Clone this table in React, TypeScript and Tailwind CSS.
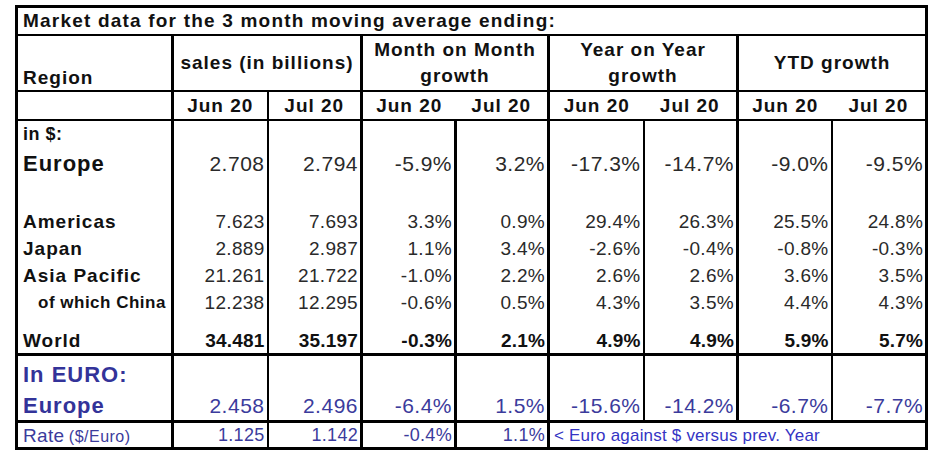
import React from "react";

type Row = {
  label: string;
  values: string[];
  kind: "normal" | "big" | "bold" | "euro" | "indent";
};

// right borders per column in the body
const bodyBorders = [
  "border-r-[3px]",
  "border-r-2",
  "border-r-[3px]",
  "border-r-[3px]",
  "border-r-[3px]",
  "border-r-2",
  "border-r-[3px]",
  "border-r-2",
  "",
];

const subBorders = [
  "border-r-[3px]",
  "border-r-2",
  "border-r-[3px]",
  "",
  "border-r-[3px]",
  "",
  "border-r-[3px]",
  "",
  "",
];

const widths = ["w-[156px]", "w-[95px]", "w-[94px]", "w-[94px]", "w-[93px]", "w-[95px]", "w-[94px]", "w-[94px]", "w-[95px]"];

const usdRows: Row[] = [
  { label: "Americas", values: ["7.623", "7.693", "3.3%", "0.9%", "29.4%", "26.3%", "25.5%", "24.8%"], kind: "normal" },
  { label: "Japan", values: ["2.889", "2.987", "1.1%", "3.4%", "-2.6%", "-0.4%", "-0.8%", "-0.3%"], kind: "normal" },
  { label: "Asia Pacific", values: ["21.261", "21.722", "-1.0%", "2.2%", "2.6%", "2.6%", "3.6%", "3.5%"], kind: "normal" },
  { label: "of which China", values: ["12.238", "12.295", "-0.6%", "0.5%", "4.3%", "3.5%", "4.4%", "4.3%"], kind: "indent" },
];

function BlankRow({ h, bottom = "" }: { h: string; bottom?: string }) {
  return (
    <tr className={cn(h, bottom)}>
      {bodyBorders.map((b, i) => (
        <td key={i} className={cn("p-0 border-black", b)} />
      ))}
    </tr>
  );
}

function cn(...parts: string[]) {
  return parts.filter(Boolean).join(" ");
}

function DataRow({ row, h, bottom = "" }: { row: Row; h: string; bottom?: string }) {
  const labelCls =
    row.kind === "big"
      ? "text-[22px] font-bold tracking-[1px] text-[#111]"
      : row.kind === "euro"
      ? "text-[22px] font-bold tracking-[1px] text-[#333399]"
      : row.kind === "indent"
      ? "text-[17px] font-bold tracking-[0.5px] text-[#111] pl-[20px]"
      : "text-[19px] font-bold tracking-[1px] text-[#111]";
  const numCls =
    row.kind === "big"
      ? "text-[21px] tracking-[0.5px] text-[#2a2a2a]"
      : row.kind === "euro"
      ? "text-[21px] tracking-[0.5px] text-[#3b3b9c]"
      : row.kind === "bold"
      ? "text-[19px] font-bold tracking-[0.2px] text-[#111]"
      : "text-[19px] tracking-[0.3px] text-[#2a2a2a]";
  return (
    <tr className={cn(h, bottom)}>
      <td className={cn("p-0 pl-[5px] border-black whitespace-nowrap leading-none", bodyBorders[0], labelCls)}>
        {row.label}
      </td>
      {row.values.map((v, i) => (
        <td
          key={i}
          className={cn("p-0 pr-[2px] text-right border-black whitespace-nowrap leading-none", bodyBorders[i + 1], numCls)}
        >
          {v}
        </td>
      ))}
    </tr>
  );
}

export default function App() {
  return (
    <div className="min-h-[454px] w-[940px] bg-white pl-[15px] pt-[5px] font-['Liberation_Sans',Arial,sans-serif]">
      <table className="w-[910px] table-fixed border-collapse border-[3px] border-black">
        <colgroup>
          {widths.map((w, i) => (
            <col key={i} className={w} />
          ))}
        </colgroup>
        <tbody>
          <tr className="h-[28px] border-b-2 border-black">
            <td colSpan={9} className="p-0 pl-[5px] text-left text-[19px] font-bold tracking-[1.2px] text-[#111] leading-none">
              Market data for the 3 month moving average ending:
            </td>
          </tr>
          <tr className="h-[56px] border-b-2 border-black text-[19px] font-bold tracking-[1px] text-[#111]">
            <td className="p-0 pl-[5px] pb-[3px] align-bottom border-r-[3px] border-black leading-none">Region</td>
            <td colSpan={2} className="p-0 text-center border-r-[3px] border-black leading-none">
              sales (in billions)
            </td>
            <td colSpan={2} className="p-0 text-center border-r-[3px] border-black leading-[26px]">
              Month on Month
              <br />
              growth
            </td>
            <td colSpan={2} className="p-0 text-center border-r-[3px] border-black leading-[26px]">
              Year on Year
              <br />
              growth
            </td>
            <td colSpan={2} className="p-0 text-center leading-none">
              YTD growth
            </td>
          </tr>
          <tr className="h-[29px] border-b-2 border-black text-[19px] font-bold tracking-[1px] text-[#111]">
            {["", "Jun 20", "Jul 20", "Jun 20", "Jul 20", "Jun 20", "Jul 20", "Jun 20", "Jul 20"].map((t, i) => (
              <td key={i} className={cn("p-0 text-center border-black leading-none whitespace-nowrap", subBorders[i])}>
                {t}
              </td>
            ))}
          </tr>

          {/* in $ */}
          <tr className="h-[28px]">
            <td className="p-0 pl-[5px] pt-[2px] align-top border-r-[3px] border-black text-[18px] font-bold tracking-[0.5px] text-[#111] leading-[22px]">
              in $:
            </td>
            {bodyBorders.slice(1).map((b, i) => (
              <td key={i} className={cn("p-0 border-black", b)} />
            ))}
          </tr>
          <DataRow
            h="h-[32px]"
            row={{ label: "Europe", values: ["2.708", "2.794", "-5.9%", "3.2%", "-17.3%", "-14.7%", "-9.0%", "-9.5%"], kind: "big" }}
          />
          <BlankRow h="h-[28px]" />
          {usdRows.map((r) => (
            <DataRow key={r.label} row={r} h="h-[27px]" />
          ))}
          <BlankRow h="h-[12px]" />
          <DataRow
            h="h-[27px]"
            bottom="border-b-[3px] border-black"
            row={{ label: "World", values: ["34.481", "35.197", "-0.3%", "2.1%", "4.9%", "4.9%", "5.9%", "5.7%"], kind: "bold" }}
          />

          {/* in euro */}
          <tr className="h-[37px]">
            <td className="p-0 pl-[5px] pt-[3px] border-r-[3px] border-black text-[22px] font-bold tracking-[1px] text-[#333399] leading-none whitespace-nowrap">
              In EURO:
            </td>
            {bodyBorders.slice(1).map((b, i) => (
              <td key={i} className={cn("p-0 border-black", b)} />
            ))}
          </tr>
          <DataRow
            h="h-[30px]"
            bottom="border-b-[3px] border-black"
            row={{ label: "Europe", values: ["2.458", "2.496", "-6.4%", "1.5%", "-15.6%", "-14.2%", "-6.7%", "-7.7%"], kind: "euro" }}
          />
          <tr className="h-[27px] text-[#3b3b9c]">
            <td className="p-0 pl-[5px] border-r-[3px] border-black leading-none whitespace-nowrap">
              <span className="text-[19px] tracking-[0.3px]">Rate</span>{" "}
              <span className="text-[16px] tracking-[0.5px]">($/Euro)</span>
            </td>
            {["1.125", "1.142", "-0.4%", "1.1%"].map((v, i) => (
              <td
                key={i}
                className={cn("p-0 pr-[2px] text-right border-black text-[18px] tracking-[0.3px] leading-none", bodyBorders[i + 1])}
              >
                {v}
              </td>
            ))}
            <td colSpan={4} className="p-0 pl-[4px] text-left text-[17px] tracking-[0.2px] text-[#3434c4] leading-none whitespace-nowrap">
              {"< Euro against $ versus prev. Year"}
            </td>
          </tr>
        </tbody>
      </table>
    </div>
  );
}
